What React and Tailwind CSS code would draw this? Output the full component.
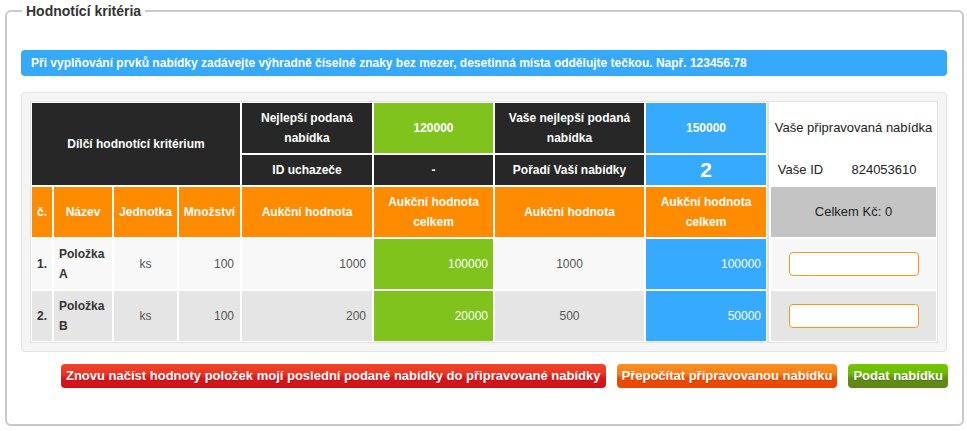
import React from "react";

const FONT = { fontFamily: '"Liberation Sans", Arial, sans-serif' };

function C({ className = "", children }) {
  return (
    <div className={"flex items-center text-[12px] leading-[20px] " + className}>
      {children}
    </div>
  );
}

const dark = "bg-[#272727] text-white font-bold justify-center text-center px-[6px]";
const orange = "bg-[#ff8c00] text-white font-bold justify-center text-center px-[4px]";
const green = "bg-[#80c31c] text-white";
const blue = "bg-[#36aaff] text-white";

function Row({ bg, n, name, unit, qty, v1, t1, v2, t2 }) {
  return (
    <>
      <C className={bg + " justify-center font-bold text-[#333]"}>{n}</C>
      <C className={bg + " justify-start px-[5px] font-bold text-[#333]"}>{name}</C>
      <C className={bg + " justify-center text-[#555]"}>{unit}</C>
      <C className={bg + " justify-end pr-[6px] text-[#555]"}>{qty}</C>
      <C className={bg + " justify-end pr-[6px] text-[#555]"}>{v1}</C>
      <C className={green + " justify-end pr-[5px]"}>{t1}</C>
      <C className={bg + " justify-center text-[#555]"}>{v2}</C>
      <C className={blue + " justify-end pr-[5px]"}>{t2}</C>
    </>
  );
}

function Btn({ grad, children }) {
  return (
    <button
      className={
        "h-[24px] px-[5px] rounded-[4px] text-white font-bold text-[13px] leading-[24px] whitespace-nowrap [text-shadow:0_1px_0_rgba(0,0,0,0.2)] " +
        grad
      }
    >
      {children}
    </button>
  );
}

export default function App() {
  return (
    <div className="w-[967px] h-[431px] bg-white pt-[2px]" style={FONT}>
      <fieldset className="ml-[5px] w-[958px] border-2 border-[#c9c9c9] rounded-[6px] px-[14px] pb-[36px]">
        <legend className="ml-[1px] px-[4px] text-[14px] leading-[18px] font-bold text-[#333]">
          Hodnotící kritéria
        </legend>

        <div className="mt-[30px] w-[926px] h-[26px] rounded-[4px] bg-[#36a9fb] text-white font-bold text-[12px] leading-[26px] pl-[10px]">
          Při vyplňování prvků nabídky zadávejte výhradně číselné znaky bez mezer, desetinná místa oddělujte tečkou. Např. 123456.78
        </div>

        <div className="mt-[16px] w-[926px] border border-[#e3e3e3] rounded-[4px] bg-[#f5f5f5] pl-[8px] pr-[7px] py-[8px] flex">
          <div className="grid grid-cols-[20px_58px_63px_61px_130px_119px_149px_120px] grid-rows-[50px_30px_50px_50px_50px] gap-[2px] p-[1px] border border-[#e2e2e2] bg-white">
            <C className={dark + " col-span-4 row-span-2"}>Dílčí hodnotící kritérium</C>
            <C className={dark}>Nejlepší podaná nabídka</C>
            <C className={green + " justify-center font-bold"}>120000</C>
            <C className={dark}>Vaše nejlepší podaná nabídka</C>
            <C className={blue + " justify-center font-bold"}>150000</C>

            <C className={dark}>ID uchazeče</C>
            <C className={dark}>-</C>
            <C className={dark}>Pořadí Vaší nabídky</C>
            <C className={blue + " justify-center font-bold text-[21px]"}>2</C>

            <C className={orange + " !px-0"}>č.</C>
            <C className={orange}>Název</C>
            <C className={orange + " !px-0"}>Jednotka</C>
            <C className={orange + " !px-0"}>Množství</C>
            <C className={orange}>Aukční hodnota</C>
            <C className={orange}>Aukční hodnota celkem</C>
            <C className={orange}>Aukční hodnota</C>
            <C className={orange}>Aukční hodnota celkem</C>

            <Row bg="bg-[#f8f8f8]" n="1." name="Položka A" unit="ks" qty="100" v1="1000" t1="100000" v2="1000" t2="100000" />
            <Row bg="bg-[#e5e5e5]" n="2." name="Položka B" unit="ks" qty="100" v1="200" t1="20000" v2="500" t2="50000" />
          </div>

          <div className="grid grid-cols-[59px_104px] grid-rows-[50px_30px_50px_50px_50px] gap-[2px] pl-[2px] pr-[1px] py-[1px] border border-[#e2e2e2] bg-white">
            <C className="col-span-2 bg-white justify-center text-[13px] text-[#222]">Vaše připravovaná nabídka</C>
            <C className="bg-white justify-center text-[13px] text-[#222]">Vaše ID</C>
            <C className="bg-white justify-center text-[13px] text-[#222]">824053610</C>
            <C className="col-span-2 bg-[#c4c4c4] justify-center text-[13px] text-[#222]">Celkem Kč: 0</C>
            <C className="col-span-2 bg-[#f7f7f7] justify-center">
              <input className="w-[130px] h-[24px] border border-[#f7941d] rounded-[4px] bg-white outline-none" />
            </C>
            <C className="col-span-2 bg-[#e5e5e5] justify-center">
              <input className="w-[130px] h-[24px] border border-[#f7941d] rounded-[4px] bg-white outline-none" />
            </C>
          </div>
        </div>

        <div className="mt-[12px] w-[927px] flex justify-end gap-[11px]">
          <Btn grad="bg-[linear-gradient(to_bottom,#f0432a_0%,#ec3522_40%,#d5161c_60%,#d0121a_100%)]">
            Znovu načíst hodnoty položek mojí poslední podané nabídky do připravované nabídky
          </Btn>
          <Btn grad="bg-[linear-gradient(to_bottom,#fb8f20_0%,#f8801a_40%,#ec4c05_60%,#e94604_100%)]">
            Přepočítat připravovanou nabídku
          </Btn>
          <Btn grad="bg-[linear-gradient(to_bottom,#74c701_0%,#6cbc02_40%,#628c16_60%,#5e8614_100%)]">
            Podat nabídku
          </Btn>
        </div>
      </fieldset>
    </div>
  );
}
